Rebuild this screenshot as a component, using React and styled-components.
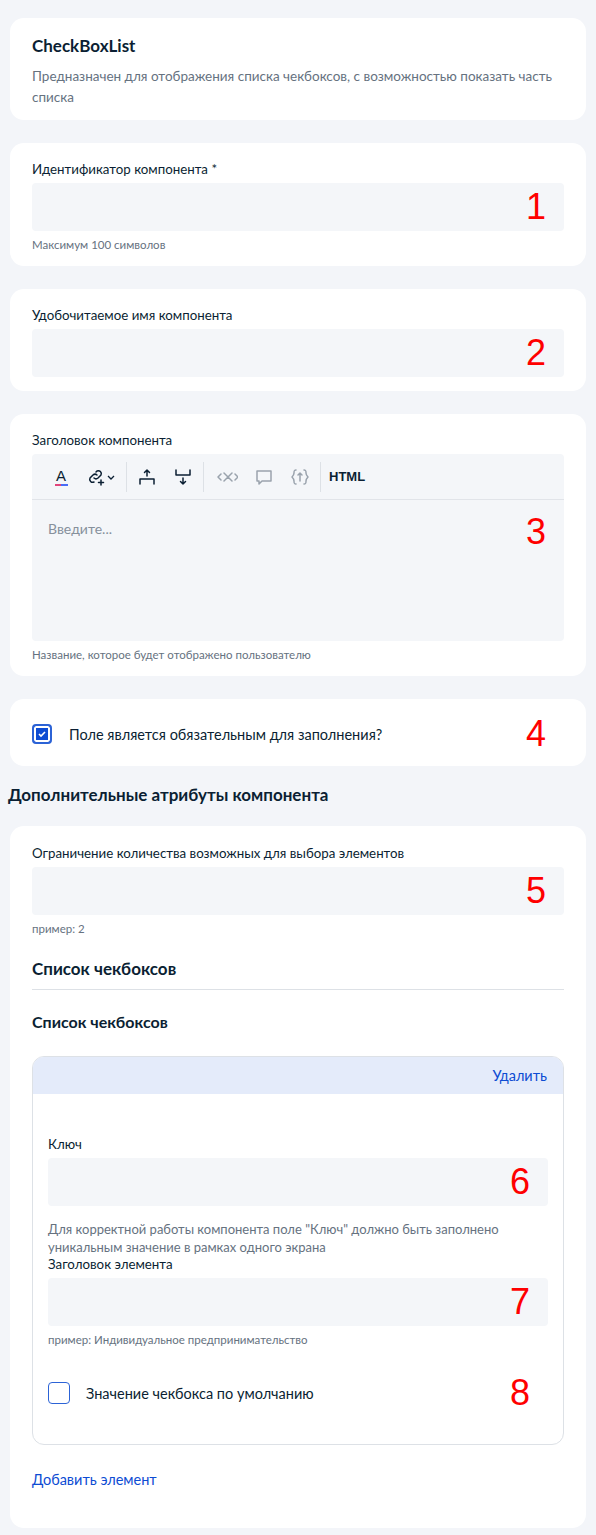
import React from "react";
import styled, { createGlobalStyle } from "styled-components";

const G = createGlobalStyle`
  body{margin:0;background:#f3f5f9;font-family:Lato,"Noto Sans",sans-serif;color:#0b1f33;}
`;
const Page = styled.div`padding:18px 10px 0;display:flex;flex-direction:column;gap:23px;`;
const Card = styled.div`background:#fff;border-radius:14px;padding:${p=>p.$pad||"18px 22px 14px"};display:flex;flex-direction:column;`;
const Title = styled.div`font-size:17px;font-weight:700;color:#0b1f33;`;
const Desc = styled.div`font-size:13.5px;color:#66727f;line-height:21px;margin-top:10px;`;
const Label = styled.div`font-size:13.3px;color:#0b1f33;line-height:16px;margin-bottom:6px;`;
const Input = styled.div`position:relative;height:48px;background:#f4f6f9;border-radius:4px;`;
const Num = styled.span`position:absolute;right:18px;top:50%;transform:translateY(-50%);font-family:"Liberation Sans",Arial,sans-serif;font-size:36px;color:#f00;line-height:1;`;
const Hint = styled.div`font-size:11.5px;color:#66727f;line-height:14px;margin-top:7px;`;
const Editor = styled.div`position:relative;background:#f4f6f9;border-radius:4px;height:187px;display:flex;flex-direction:column;`;
const Toolbar = styled.div`height:45px;border-bottom:1px solid #e1e4e9;display:flex;align-items:center;padding-left:14px;`;
const Tool = styled.span`display:flex;align-items:center;padding:0 8px;color:${p=>p.$dim?"#9aa3ad":"#0b1f33"};`;
const Sep = styled.span`width:1px;height:30px;background:#dde1e6;margin:0 2px;`;
const Html = styled.span`font-size:13px;font-weight:700;padding-left:6px;font-family:"Liberation Sans",Arial,sans-serif;`;
const Placeholder = styled.div`font-size:14px;color:#86909c;padding:20px 16px;`;
const CheckRow = styled.label`display:flex;align-items:center;gap:${p=>p.$gap||16}px;position:relative;font-size:14.5px;color:#0b1f33;`;
const Box = styled.span`width:20px;height:20px;box-sizing:border-box;border-radius:4px;border:2px solid #2c63d6;display:flex;align-items:center;justify-content:center;
  ${p=>p.$on?"box-shadow:inset 0 0 0 2px #fff;background:#0d4cd3;":"background:#fff;"}`;
const Heading = styled.div`font-size:17px;font-weight:700;margin:-5px 0 -2px -2px;`;
const SubHead = styled.div`font-size:${p=>p.$s||17}px;font-weight:700;padding-bottom:${p=>p.$line?"10px":"0"};border-bottom:${p=>p.$line?"1px solid #dde1e6":"none"};margin-top:${p=>p.$mt||0}px;`;
const Inner = styled.div`margin-top:25px;border:1px solid #dde1e6;border-radius:12px;overflow:hidden;`;
const InnerHead = styled.div`background:#e4ebfa;height:37px;display:flex;justify-content:flex-end;align-items:center;padding-right:16px;font-size:14.5px;color:#0d4cd3;`;
const InnerBody = styled.div`padding:42px 15px 40px;display:flex;flex-direction:column;`;
const Note = styled.div`font-size:13px;color:#66727f;line-height:18px;margin-top:14px;`;
const Link = styled.div`font-size:14.5px;color:#0d4cd3;margin:26px 0 40px;`;

const Ic = ({children,w=20}) => <svg width={w} height="20" viewBox="0 0 20 20" fill="none" stroke="currentColor" strokeWidth="1.5" strokeLinecap="round" strokeLinejoin="round">{children}</svg>;

export default function App(){
  return <><G/><Page>
    <Card $pad="17px 22px 12px">
      <Title>CheckBoxList</Title>
      <Desc>Предназначен для отображения списка чекбоксов, с возможностью показать часть списка</Desc>
    </Card>
    <Card>
      <Label>Идентификатор компонента *</Label>
      <Input><Num>1</Num></Input>
      <Hint>Максимум 100 символов</Hint>
    </Card>
    <Card $pad="18px 22px 14px">
      <Label>Удобочитаемое имя компонента</Label>
      <Input><Num>2</Num></Input>
    </Card>
    <Card>
      <Label>Заголовок компонента</Label>
      <Editor>
        <Toolbar>
          <Tool><svg width="16" height="22" viewBox="0 0 16 22"><text x="2" y="15" fontSize="15" fontFamily="Liberation Sans,Arial" fill="#0b1f33">A</text><rect x="1" y="18" width="13" height="2" fill="#e0457b"/><rect x="7" y="18" width="7" height="2" fill="#4a6cf7"/></svg></Tool>
          <Tool><Ic><path d="M8 11a3 3 0 0 0 4 0l3-3a3 3 0 0 0-4-4l-1 1"/><path d="M11 8a3 3 0 0 0-4 0l-3 3a3 3 0 0 0 4 4"/><path d="M15 13v5M12.5 15.5h5"/></Ic>
            <svg width="10" height="10" viewBox="0 0 10 10" fill="none" stroke="currentColor" strokeWidth="1.3"><path d="M2 4l3 3 3-3"/></svg></Tool>
          <Sep/>
          <Tool><Ic><path d="M3 17v-5h14v5M10 3v6M7.5 5.5L10 3l2.5 2.5"/></Ic></Tool>
          <Tool><Ic><path d="M3 3v5h14V3M10 11v6M7.5 14.5L10 17l2.5-2.5"/></Ic></Tool>
          <Sep/>
          <Tool $dim><Ic w={24}><path d="M5 7l-3 3 3 3M19 7l3 3-3 3M8 6l8 8M16 6l-8 8"/></Ic></Tool>
          <Tool $dim><Ic><path d="M3 4h14v10H8l-3 3v-3H3z"/></Ic></Tool>
          <Tool $dim><Ic><path d="M6 3c-2 0-2 1-2 3s-1 3-2 4c1 1 2 2 2 4s0 3 2 3M14 3c2 0 2 1 2 3s1 3 2 4c-1 1-2 2-2 4s0 3-2 3M10 14V6M8 8l2-2 2 2"/></Ic></Tool>
          <Sep/>
          <Html>HTML</Html>
        </Toolbar>
        <Placeholder>Введите...</Placeholder>
        <Num style={{top:78}}>3</Num>
      </Editor>
      <Hint>Название, которое будет отображено пользователю</Hint>
    </Card>
    <Card $pad="25px 22px 22px">
      <CheckRow $gap={17}><Box $on><svg width="10" height="10" viewBox="0 0 10 10" fill="none" stroke="#fff" strokeWidth="1.6"><path d="M2 5l2 2 4-4"/></svg></Box>Поле является обязательным для заполнения?<Num>4</Num></CheckRow>
    </Card>
    <Heading>Дополнительные атрибуты компонента</Heading>
    <Card $pad="19px 22px 0">
      <Label>Ограничение количества возможных для выбора элементов</Label>
      <Input><Num>5</Num></Input>
      <Hint>пример: 2</Hint>
      <SubHead $line $mt={22}>Список чекбоксов</SubHead>
      <SubHead $s={16} $mt={22}>Список чекбоксов</SubHead>
      <Inner>
        <InnerHead>Удалить</InnerHead>
        <InnerBody>
          <Label>Ключ</Label>
          <Input><Num>6</Num></Input>
          <Note>Для корректной работы компонента поле "Ключ" должно быть заполнено уникальным значение в рамках одного экрана</Note>
          <Label>Заголовок элемента</Label>
          <Input><Num>7</Num></Input>
          <Hint>пример: Индивидуальное предпринимательство</Hint>
          <CheckRow style={{marginTop:35}}><Box style={{width:22,height:22,borderWidth:1.5}}/>Значение чекбокса по умолчанию<Num>8</Num></CheckRow>
        </InnerBody>
      </Inner>
      <Link>Добавить элемент</Link>
    </Card>
  </Page></>;
}
